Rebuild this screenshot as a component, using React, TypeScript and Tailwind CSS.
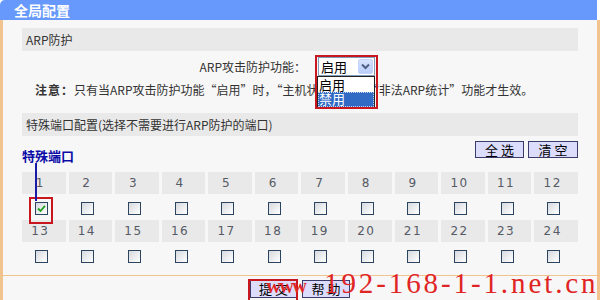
import React from "react";

function Box({ checked = false }: { checked?: boolean }) {
  return (
    <div className="w-[13px] h-[13px] border border-[#2b4560] bg-gradient-to-br from-[#d6d9de] to-[#ffffff] flex items-center justify-center">
      {checked && (
        <svg width="9" height="9" viewBox="0 0 9 9">
          <path d="M1 4.5 L3.5 7 L8 1.8" fill="none" stroke="#21a121" strokeWidth="1.8" />
        </svg>
      )}
    </div>
  );
}

function Q({ c }: { c: string }) {
  return <span className="[font-feature-settings:'fwid']">{c}</span>;
}

function PortRows({ from }: { from: number }) {
  const ports = Array.from({ length: 12 }, (_, i) => from + i);
  return (
    <>
      <div className="grid grid-cols-12 gap-x-[3px]">
        {ports.map((p) => (
          <div
            key={p}
            className="h-[22px] bg-[#e9e9e9] flex items-center justify-center pr-[7px] font-['DejaVu_Sans',sans-serif] text-[12px] tracking-[1.5px] text-[#555a66]"
          >
            {p}
          </div>
        ))}
      </div>
      <div className="grid grid-cols-12 gap-x-[3px]">
        {ports.map((p) => (
          <div key={p} className="flex justify-center pr-[5px] pt-[8px] h-[26px]">
            {p === 1 ? (
              <div className="relative">
                <Box checked />
                <div className="absolute -left-[6px] -right-[5px] -top-[5px] -bottom-[4px] border-2 border-[#c8171e]" />
              </div>
            ) : (
              <Box />
            )}
          </div>
        ))}
      </div>
    </>
  );
}

export default function App() {
  return (
    <div className="relative w-[600px] h-[300px] overflow-hidden bg-white font-['Noto_Sans_CJK_SC',sans-serif] text-[12px] text-[#333]">
      <div className="w-[597px] h-[20px] bg-[#6699fb] rounded-tl-[5px] pl-[14px] text-[14px] leading-[20px] font-bold text-white">
        全局配置
      </div>
      <div className="h-[280px] w-[600px] border-l-[3px] border-r-[3px] border-[#f1c48f] bg-[#f7f7f7] flex flex-col">
        <div className="relative h-[255px] px-[19px] pt-[8px]">
          <div className="h-[23px] bg-[#e9e9e9] pl-[4px] leading-[23px]">ARP防护</div>
          <div className="flex items-center h-[19px] mt-[6px]">
            <div className="w-[284px] text-right">ARP攻击防护功能：</div>
            <div className="relative ml-[12px] w-[57px] h-[19px] z-10">
              <div className="w-full h-full border border-[#7f9db9] bg-white flex items-center">
                <span className="pl-[2px] text-[13px] leading-[17px] text-black">启用</span>
                <div className="ml-auto mr-px w-[15px] h-[15px] bg-gradient-to-b from-[#d9e4fd] to-[#b9cefa] border border-[#c3d3fd] rounded-[2px] flex items-center justify-center">
                  <svg width="9" height="7" viewBox="0 0 9 7">
                    <path d="M1 1.5 L4.5 5 L8 1.5" fill="none" stroke="#4d6185" strokeWidth="2" />
                  </svg>
                </div>
              </div>
              <div className="absolute left-[-1px] top-[19px] w-[58px] border border-[#222] bg-white">
                <div className="h-[15px] leading-[15px] text-[13px] text-black pl-px">启用</div>
                <div className="h-[15px] leading-[14px] text-[13px] text-white pl-px bg-[#316ac5] outline-1 outline-dotted outline-offset-[-1px] outline-[#c9d6f0]">禁用</div>
              </div>
              <div className="absolute left-[-3px] top-[-2px] w-[63px] h-[54px] border-2 border-[#c8171e]" />
            </div>
          </div>
          <div className="h-[22px] leading-[22px] mt-[3px] pl-[13px] whitespace-nowrap">
            <span className="font-bold tracking-[1px]">注意：</span>只有当ARP攻击防护功能<Q c="“" />启用<Q c="”" />时，<Q c="“" />主机状态<Q c="”" />中的<Q c="“" />非法ARP统计<Q c="”" />功能才生效。
          </div>
          <div className="h-[23px] bg-[#e9e9e9] pl-[4px] leading-[23px] mt-[12px]">特殊端口配置(选择不需要进行ARP防护的端口)</div>
          <div className="flex justify-between items-start mt-[5px] h-[22px]">
            <div className="mt-[8px] leading-[14px] text-[13px] font-bold text-[#0b0ba8]">特殊端口</div>
            <div className="flex gap-[4px]">
              <button className="w-[49px] h-[17px] bg-[#dcdcfc] border border-[#3c3c6c] text-[13px] leading-[15px] text-black">全 选</button>
              <button className="w-[50px] h-[17px] bg-[#dcdcfc] border border-[#3c3c6c] text-[13px] leading-[15px] text-black">清 空</button>
            </div>
          </div>
          <div className="mt-[9px]">
            <PortRows from={1} />
            <PortRows from={13} />
          </div>
          <div className="absolute left-[32px] top-[143px] w-[2px] h-[38px] bg-[#1a1aa8]" />
        </div>
        <div className="h-[25px] border-t border-[#f1c48f] flex justify-center gap-[5px] pt-[4px]">
          <div className="relative">
            <button className="w-[47px] h-[18px] bg-[#dcdcfc] border border-[#3c3c6c] text-[13px] leading-[16px] text-black">提 交</button>
            <div className="absolute -left-[2px] -right-[1px] -top-[1px] -bottom-[3px] border-2 border-[#c8171e]" />
          </div>
          <button className="w-[48px] h-[18px] bg-[#dcdcfc] border border-[#3c3c6c] text-[13px] leading-[16px] text-black">帮 助</button>
        </div>
      </div>
      <div className="absolute left-[266px] top-[281px] font-['Liberation_Serif',serif] font-bold text-[15px] leading-[15px] tracking-[-2px] text-[#e02424]">WWW</div>
      <div className="absolute left-[324px] top-[269px] font-['Liberation_Serif',serif] text-[29px] leading-[29px] tracking-[2.9px] text-[#e02424] whitespace-nowrap">
        192-168-1-1.net.cn
      </div>
    </div>
  );
}
